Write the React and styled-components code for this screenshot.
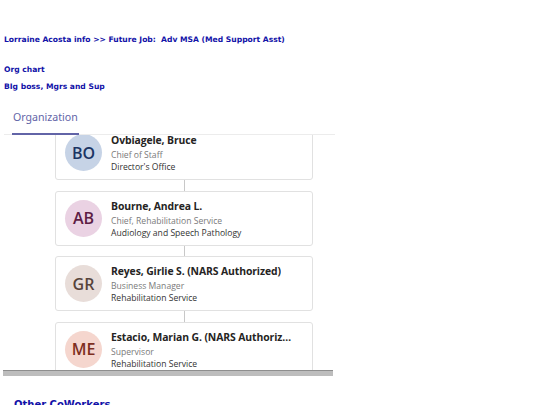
import styled, { createGlobalStyle } from "styled-components";

const GlobalStyle = createGlobalStyle`
  html, body {
    margin: 0;
    padding: 0;
    background: #ffffff;
  }
  body {
    font-family: "DejaVu Sans", Verdana, sans-serif;
  }
`;

const Page = styled.div`
  width: 540px;
  height: 405px;
  overflow: hidden;
  padding: 35px 0 0 4px;
  box-sizing: border-box;
`;

const Heading = styled.div`
  font-family: "DejaVu Sans", Verdana, sans-serif;
  font-weight: bold;
  font-size: ${(p) => p.size || 7.6}px;
  color: #1212a8;
  line-height: 10px;
  margin-top: ${(p) => p.top || 0}px;
  padding-left: ${(p) => p.indent || 0}px;
`;

const Frame = styled.div`
  width: 331px;
  margin-top: 12px;
  display: flex;
  flex-direction: column;
`;

const TabBar = styled.div`
  display: flex;
  height: 30px;
  padding-left: 8px;
  border-bottom: 1px solid #ececec;
`;

const Tab = styled.div`
  font-family: "Noto Sans", "Open Sans", sans-serif;
  font-size: 10.6px;
  color: #6264a7;
  padding: 6px 1px 0;
  border-bottom: 2px solid #6264a7;
  margin-bottom: -1px;
`;

const Viewport = styled.div`
  height: 235px;
  overflow: hidden;
  padding-left: 51px;
`;

const Chart = styled.div`
  margin-top: -10px;
  width: 258px;
  display: flex;
  flex-direction: column;
  align-items: center;
`;

const Card = styled.div`
  width: 100%;
  height: 55px;
  flex: none;
  box-sizing: border-box;
  border: 1px solid #e1e1e1;
  border-radius: 3px;
  display: flex;
  align-items: center;
  padding-left: 9px;
  gap: 9px;
  background: #fff;
`;

const Connector = styled.div`
  width: 1px;
  height: 10.5px;
  flex: none;
  background: #c8c8c8;
`;

const Avatar = styled.div`
  width: 37px;
  height: 37px;
  border-radius: 50%;
  flex: none;
  background: ${(p) => p.bg};
  color: ${(p) => p.fg};
  display: flex;
  align-items: center;
  justify-content: center;
  font-family: "Open Sans", "Noto Sans", sans-serif;
  font-weight: 600;
  font-size: 16px;
`;

const Info = styled.div`
  display: flex;
  flex-direction: column;
  min-width: 0;
  padding-top: 1px;
  font-family: "Open Sans", "Noto Sans", sans-serif;
`;

const Name = styled.div`
  font-weight: 700;
  font-size: 10.4px;
  letter-spacing: -0.1px;
  line-height: 15px;
  color: #252423;
  white-space: nowrap;
  overflow: hidden;
  text-overflow: ellipsis;
  max-width: 184px;
`;

const Line = styled.div`
  font-size: 8.6px;
  line-height: 12px;
  margin-top: ${(p) => (p.muted ? 1 : 0)}px;
  color: ${(p) => (p.muted ? "#7a7a7a" : "#333333")};
  white-space: nowrap;
`;

const Scrollbar = styled.div`
  width: 330px;
  height: 5px;
  background: #bdbdbd;
  border-top: 1px solid #8e8e8e;
  margin-left: -1px;
`;

const people = [
  {
    initials: "BO",
    name: "Ovbiagele, Bruce",
    title: "Chief of Staff",
    dept: "Director's Office",
    bg: "#c6d3e6",
    fg: "#1b3564",
  },
  {
    initials: "AB",
    name: "Bourne, Andrea L.",
    title: "Chief, Rehabilitation Service",
    dept: "Audiology and Speech Pathology",
    bg: "#ead2e3",
    fg: "#5e1d45",
  },
  {
    initials: "GR",
    name: "Reyes, Girlie S. (NARS Authorized)",
    title: "Business Manager",
    dept: "Rehabilitation Service",
    bg: "#e8ddd9",
    fg: "#57443c",
  },
  {
    initials: "ME",
    name: "Estacio, Marian G. (NARS Authorized)",
    title: "Supervisor",
    dept: "Rehabilitation Service",
    bg: "#f5d6ce",
    fg: "#7e2f1f",
  },
];

export default function App() {
  return (
    <>
      <GlobalStyle />
      <Page>
        <Heading>Lorraine Acosta info &gt;&gt; Future Job:&nbsp; Adv MSA (Med Support Asst)</Heading>
        <Heading top={20}>Org chart</Heading>
        <Heading top={7}>BIg boss, Mgrs and Sup</Heading>
        <Frame>
          <TabBar>
            <Tab>Organization</Tab>
          </TabBar>
          <Viewport>
            <Chart>
              {people.map((p, i) => (
                <>
                  {i > 0 && <Connector key={`c${i}`} />}
                  <Card key={p.initials}>
                    <Avatar bg={p.bg} fg={p.fg}>
                      {p.initials}
                    </Avatar>
                    <Info>
                      <Name>{p.name}</Name>
                      <Line muted>{p.title}</Line>
                      <Line>{p.dept}</Line>
                    </Info>
                  </Card>
                </>
              ))}
            </Chart>
          </Viewport>
          <Scrollbar />
        </Frame>
        <Heading size={10} top={24} indent={10}>
          Other CoWorkers
        </Heading>
      </Page>
    </>
  );
}
